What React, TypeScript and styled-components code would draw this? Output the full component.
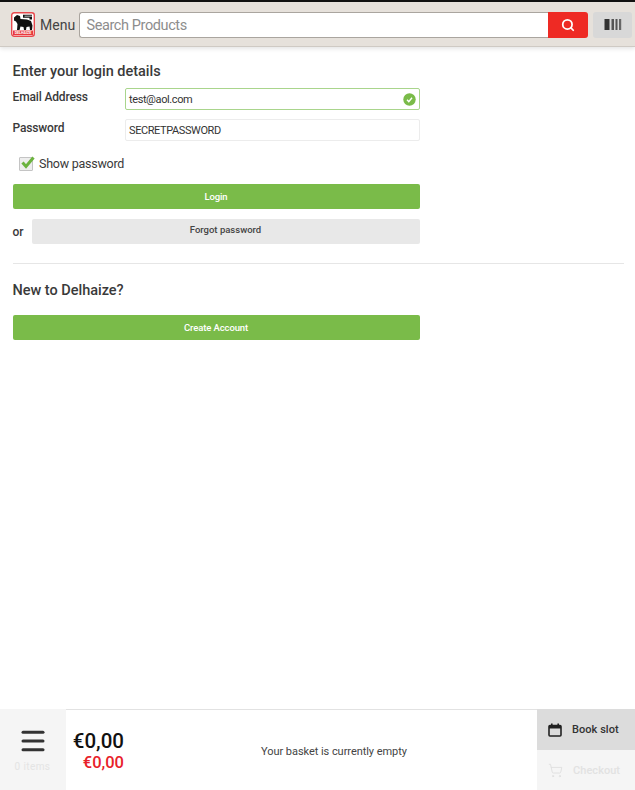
import React from "react";
import styled, { createGlobalStyle } from "styled-components";
import { Search, ShoppingCart, Menu as MenuIcon } from "lucide-react";

const Global = createGlobalStyle`
  html, body { margin: 0; padding: 0; height: 100%; background: #fff; }
  #root { height: 100%; }
  * { box-sizing: border-box; }
  body { font-family: "Roboto", "Liberation Sans", sans-serif; color: #333; }
`;

const Page = styled.div`
  width: 635px;
  height: 790px;
  display: flex;
  flex-direction: column;
  overflow: hidden;
  border-top: 2px solid #111;
`;

const Header = styled.header`
  height: 45px;
  flex: none;
  background: #e6e1db;
  border-bottom: 1px solid #cfcac4;
  box-shadow: 0 2px 4px rgba(0, 0, 0, 0.1);
  display: flex;
  align-items: center;
  padding: 1px 3px 0 11px;
`;

const LogoBox = styled.svg`
  width: 24px;
  height: 25px;
  flex: none;
`;

const MenuLabel = styled.span`
  font-size: 14px;
  color: #444;
  margin-left: 5px;
  width: 39px;
  padding-top: 1px;
`;

const SearchInput = styled.div`
  width: 470px;
  height: 26px;
  background: #fff;
  border: 1px solid #aaa59f;
  border-right: none;
  border-radius: 3px 0 0 3px;
  padding: 1px 0 0 6.5px;
  display: flex;
  align-items: center;
  font-size: 14.5px;
  letter-spacing: -0.4px;
  color: #8d8d8d;
`;

const SearchButton = styled.div`
  width: 40px;
  height: 26px;
  background: #ee2a24;
  border-radius: 0 3px 3px 0;
  display: flex;
  align-items: center;
  justify-content: center;
  color: #fff;
`;

const BarcodeButton = styled.div`
  width: 39px;
  height: 26px;
  margin-left: 5px;
  background: #d8d8d8;
  border-radius: 3px;
  display: flex;
  align-items: center;
  justify-content: center;
`;

const Main = styled.main`
  flex: 1;
  padding: 16px 11px 0 12.5px;
`;

const Heading = styled.h2`
  margin: 0;
  font-size: 14.5px;
  font-weight: 500;
  line-height: 18px;
  letter-spacing: -0.02px;
  color: #3a3a3a;
`;

const Narrow = styled.div`
  width: 407px;
`;

const FieldRow = styled.div<{ $top: number }>`
  display: flex;
  margin-top: ${(p) => p.$top}px;
`;

const FieldLabel = styled.label`
  width: 112px;
  flex: none;
  font-size: 12px;
  font-weight: 500;
  line-height: 14px;
  padding-top: 2px;
  letter-spacing: -0.15px;
  color: #3a3a3a;
`;

const TextField = styled.div<{ $valid?: boolean }>`
  position: relative;
  flex: 1;
  height: 22px;
  background: #fff;
  border: 1px solid ${(p) => (p.$valid ? "#a9d58c" : "#ececec")};
  border-radius: 2px;
  padding-left: 3.5px;
  display: flex;
  align-items: center;
  font-size: 11px;
  letter-spacing: -0.4px;
  color: #333;
`;

const ValidBadge = styled.svg`
  position: absolute;
  right: 3px;
  top: 3.5px;
  width: 13px;
  height: 13px;
`;

const CheckRow = styled.div`
  display: flex;
  align-items: center;
  margin: 12px 0 0 6.5px;
  height: 20px;
`;

const CheckBox = styled.span`
  position: relative;
  width: 14px;
  height: 14px;
  background: #eee;
  border: 1px solid #c4c4c4;
  border-radius: 1px;
  margin-top: 1px;
`;

const CheckMark = styled.svg`
  position: absolute;
  left: -1px;
  top: -4px;
  width: 17px;
  height: 17px;
`;

const CheckLabel = styled.span`
  margin-left: 6px;
  font-size: 12.5px;
  letter-spacing: -0.25px;
  color: #3a3a3a;
`;

const PrimaryButton = styled.div<{ $top: number }>`
  height: 25px;
  margin-top: ${(p) => p.$top}px;
  background: #7abb49;
  border-radius: 2px;
  color: #fff;
  font-size: 9.5px;
  font-weight: 500;
  letter-spacing: -0.1px;
  display: flex;
  align-items: center;
  justify-content: center;
`;

const OrRow = styled.div`
  display: flex;
  align-items: center;
  margin-top: 10px;
`;

const OrText = styled.span`
  width: 19px;
  flex: none;
  font-size: 12px;
  font-weight: 500;
  color: #3a3a3a;
`;

const GreyButton = styled.div`
  flex: 1;
  height: 25px;
  padding-bottom: 4px;
  background: #e8e8e8;
  border-radius: 2px;
  color: #444;
  font-size: 9.5px;
  font-weight: 500;
  display: flex;
  align-items: center;
  justify-content: center;
`;

const Divider = styled.hr`
  border: none;
  border-top: 1px solid #e6e6e6;
  margin: 19px 0 18px;
`;

const Footer = styled.footer`
  flex: none;
  height: 81px;
  display: flex;
  border-top: 1px solid #e2e2e2;
`;

const ItemsCell = styled.div`
  width: 66px;
  flex: none;
  background: #f5f5f5;
  margin-top: -1px;
  padding: 17px 1px 0 0;
  display: flex;
  flex-direction: column;
  align-items: center;
`;

const ItemsText = styled.span`
  margin-top: 5px;
  font-size: 10px;
  letter-spacing: 0.4px;
  color: #e4e4e4;
`;

const Totals = styled.div`
  width: 58px;
  flex: none;
  padding-top: 20px;
  display: flex;
  flex-direction: column;
  align-items: flex-end;
`;

const Total = styled.span`
  font-size: 20.5px;
  font-weight: 500;
  line-height: 22px;
  color: #111;
`;

const Discount = styled.span`
  font-size: 16.5px;
  font-weight: 500;
  line-height: 22px;
  color: #e8212a;
`;

const BasketNote = styled.div`
  flex: 1;
  display: flex;
  align-items: center;
  justify-content: center;
  padding: 2px 0 0 7px;
  font-size: 11px;
  letter-spacing: -0.05px;
  color: #444;
`;

const Actions = styled.div`
  width: 98px;
  flex: none;
  display: flex;
  flex-direction: column;
  margin-top: -1px;
`;

const Action = styled.div<{ $enabled?: boolean }>`
  height: ${(p) => (p.$enabled ? "41px" : "41px")};
  display: flex;
  align-items: center;
  padding: ${(p) => (p.$enabled ? "1px" : "2px")} 0 0 11px;
  gap: 10px;
  background: ${(p) => (p.$enabled ? "#dcdcdc" : "#f5f5f5")};
  color: ${(p) => (p.$enabled ? "#333" : "#e2e2e2")};
  font-size: 11px;
  font-weight: 500;
  letter-spacing: 0.05px;
`;

const IconSvg = styled.svg`
  width: 14px;
  height: 14px;
  flex: none;
`;

export default function App() {
  return (
    <Page>
      <Global />
      <Header>
        <LogoBox viewBox="0 0 24 25">
          <rect x="0.7" y="0.7" width="22.6" height="23.6" rx="2.5" fill="#fff" stroke="#e8484d" strokeWidth="1.4" />
          <rect x="2" y="18.5" width="20" height="4.5" fill="#e8383d" />
          <path d="M3 5.5 L6 3 L9 4 L9.5 7 L16 7.5 L20 9 L21.5 13.5 L21 18 L19 18 L18.5 14.5 L15.5 15 L15 18 L13 18 L12.5 15 L9.5 14.5 L8.5 18 L6 18 L6.5 12 L5 9.5 L3 8.5 Z" fill="#111" />
          <path d="M12 2.7 H21 V3.7 H13.5 V4.5 H21 V7.6 H18.5 V5.8 H12 Z" fill="#111" />
          <text x="12" y="22.2" fontSize="3.6" fontWeight="700" fill="#fff" textAnchor="middle" fontFamily="Roboto, sans-serif">DELHAIZE</text>
        </LogoBox>
        <MenuLabel>Menu</MenuLabel>
        <SearchInput>Search Products</SearchInput>
        <SearchButton>
          <Search size={14} strokeWidth={3} />
        </SearchButton>
        <BarcodeButton>
          <svg width="18" height="11" viewBox="0 0 18 11">
            <rect x="0.5" y="0" width="5" height="11" fill="#333" />
            <rect x="7.5" y="0" width="2.5" height="11" fill="#555" />
            <rect x="11.5" y="0" width="2" height="11" fill="#555" />
            <rect x="15" y="0" width="2.2" height="11" fill="#666" />
          </svg>
        </BarcodeButton>
      </Header>
      <Main>
        <Heading>Enter your login details</Heading>
        <Narrow>
          <FieldRow $top={7}>
            <FieldLabel>Email Address</FieldLabel>
            <TextField $valid>
              test@aol.com
              <ValidBadge viewBox="0 0 13 13">
                <circle cx="6.5" cy="6.5" r="6.2" fill="#7abb49" />
                <path d="M4 6.8 L5.8 8.6 L9 4.8" fill="none" stroke="#fff" strokeWidth="1.4" />
              </ValidBadge>
            </TextField>
          </FieldRow>
          <FieldRow $top={9}>
            <FieldLabel>Password</FieldLabel>
            <TextField>SECRETPASSWORD</TextField>
          </FieldRow>
          <CheckRow>
            <CheckBox>
              <CheckMark viewBox="0 0 17 17">
                <path d="M3.5 8.5 L7 12.5 L14.5 3.5" fill="none" stroke="#6cb33f" strokeWidth="3" />
              </CheckMark>
            </CheckBox>
            <CheckLabel>Show password</CheckLabel>
          </CheckRow>
          <PrimaryButton $top={11}>Login</PrimaryButton>
          <OrRow>
            <OrText>or</OrText>
            <GreyButton>Forgot password</GreyButton>
          </OrRow>
        </Narrow>
        <Divider />
        <Heading>New to Delhaize?</Heading>
        <Narrow>
          <PrimaryButton $top={15}>Create Account</PrimaryButton>
        </Narrow>
      </Main>
      <Footer>
        <ItemsCell>
          <MenuIcon size={30} strokeWidth={2.4} color="#333" />
          <ItemsText>0 items</ItemsText>
        </ItemsCell>
        <Totals>
          <Total>€0,00</Total>
          <Discount>€0,00</Discount>
        </Totals>
        <BasketNote>Your basket is currently empty</BasketNote>
        <Actions>
          <Action $enabled>
            <IconSvg viewBox="0 0 14 14">
              <rect x="1" y="2.5" width="12" height="10.5" rx="1" fill="none" stroke="#222" strokeWidth="1.6" />
              <rect x="1" y="2.5" width="12" height="3" fill="#222" />
              <rect x="3" y="0.5" width="1.6" height="3" fill="#222" />
              <rect x="9.4" y="0.5" width="1.6" height="3" fill="#222" />
            </IconSvg>
            <span>Book slot</span>
          </Action>
          <Action>
            <ShoppingCart size={15} strokeWidth={1.4} color="#dedede" />
            <span>Checkout</span>
          </Action>
        </Actions>
      </Footer>
    </Page>
  );
}
